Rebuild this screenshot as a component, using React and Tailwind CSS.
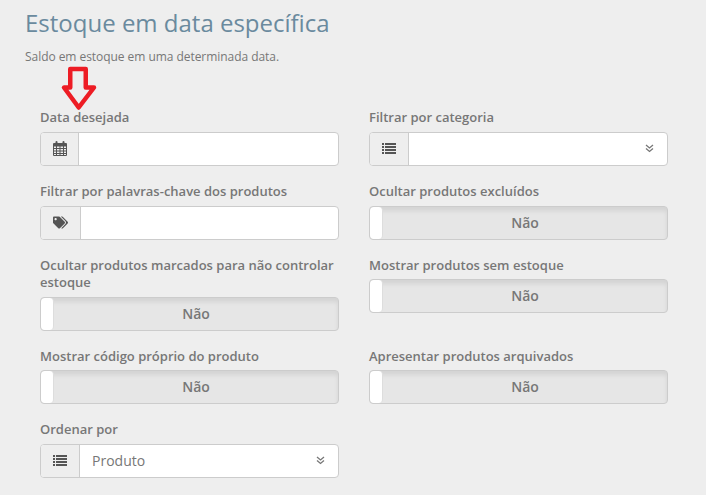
import { FaTags } from 'react-icons/fa'

function CalendarIcon() {
  return (
    <svg width="14" height="15" viewBox="0 0 14 15" className="text-[#555]">
      <path fill="currentColor" fillRule="evenodd" d="M1 2h1.500V1a1 1 0 0 1 2 0v1h5V1a1 1 0 0 1 2 0v1H13a1 1 0 0 1 1 1v11a1 1 0 0 1-1 1H1a1 1 0 0 1-1-1V3a1 1 0 0 1 1-1zM1 5.500V7h2V5.500zm3 0V7h2.500V5.500zm3.500 0V7H10V5.500zm3.500 0V7h2V5.500zM1 8v1.500h2V8zm3 0v1.500h2.500V8zm3.500 0v1.500H10V8zM11 8v1.500h2V8zM1 10.500V12h2v-1.500zm3 0V12h2.500v-1.500zm3.500 0V12H10v-1.500zm3.500 0V12h2v-1.500zM1 13v1h2v-1zm3 0v1h2.500v-1zm3.500 0v1H10v-1zm3.500 0v1h2v-1z" />
    </svg>
  )
}

function ListIcon() {
  return (
    <svg width="14" height="11" viewBox="0 0 14 11" className="text-[#555]">
      <path fill="currentColor" d="M0 0h2v2H0zM3 0h11v2H3zM0 3h2v2H0zM3 3h11v2H3zM0 6h2v2H0zM3 6h11v2H3zM0 9h2v2H0zM3 9h11v2H3z" />
    </svg>
  )
}

function ChevronsIcon() {
  return (
    <svg width="9" height="9" viewBox="0 0 9 9" className="text-[#777]">
      <path d="M1 1L4.500 4L8 1M1 4.500L4.500 7.500L8 4.500" fill="none" stroke="currentColor" strokeWidth="1.300" />
    </svg>
  )
}

function Label({ children }) {
  return <label className="block mb-[5px] text-[13px] leading-[17.6px] font-semibold text-[#777]">{children}</label>
}

function InputGroup({ icon, addon, select, value }) {
  return (
    <div className="flex h-[34px] rounded-[4px] border border-[#ccc] overflow-hidden bg-white">
      <span className={`flex items-center justify-center shrink-0 bg-[#eee] border-r border-[#ccc] ${addon}`}>{icon}</span>
      <div className="flex-1 flex items-center justify-between pl-[12px] pr-[13px] text-[14px] text-[#777]">
        <span>{value}</span>
        {select && <ChevronsIcon />}
      </div>
    </div>
  )
}

function Toggle() {
  return (
    <div className="flex h-[34px] rounded-[4px] border border-[#ccc] bg-[#e6e6e6] shadow-[inset_0_4px_4px_rgba(0,0,0,0.08)] overflow-hidden">
      <span className="w-[13px] shrink-0 bg-white rounded-[4px] border-r border-[#ddd]" />
      <span className="flex-1 flex items-center justify-center pb-[0.8px] text-[14px] font-semibold text-[#777]">Não</span>
    </div>
  )
}

export default function App() {
  return (
    <div className="relative h-[495px] overflow-hidden bg-[#eee] font-['Open_Sans',sans-serif]">
      <div className="px-[25px] pt-[6px]">
        <h1 className="text-[24px] leading-[34px] font-normal text-[#6a8a9e]">Estoque em data específica</h1>
        <p className="mt-[8px] text-[12px] leading-[17px] tracking-[-0.05px] text-[#777]">Saldo em estoque em uma determinada data.</p>
      </div>

      <div className="grid grid-cols-[299px_299px] gap-x-[30px] gap-y-[17px] pl-[40px] pt-[44.4px]">
        <div>
          <Label>Data desejada</Label>
          <InputGroup addon="w-[38px]" icon={<CalendarIcon />} />
        </div>
        <div>
          <Label>Filtrar por categoria</Label>
          <InputGroup addon="w-[39px]" icon={<ListIcon />} select />
        </div>
        <div>
          <Label>Filtrar por palavras-chave dos produtos</Label>
          <InputGroup addon="w-[40px]" icon={<FaTags className="text-[#555] text-[15px]" />} />
        </div>
        <div>
          <Label>Ocultar produtos excluídos</Label>
          <Toggle />
        </div>
        <div>
          <Label>Ocultar produtos marcados para não controlar estoque</Label>
          <Toggle />
        </div>
        <div>
          <Label>Mostrar produtos sem estoque</Label>
          <Toggle />
        </div>
        <div>
          <Label>Mostrar código próprio do produto</Label>
          <Toggle />
        </div>
        <div>
          <Label>Apresentar produtos arquivados</Label>
          <Toggle />
        </div>
        <div>
          <Label>Ordenar por</Label>
          <InputGroup addon="w-[39px]" icon={<ListIcon />} select value="Produto" />
        </div>
      </div>

      {/* red annotation arrow on top of the form */}
      <svg width="40" height="48" viewBox="0 0 40 48" className="absolute left-[59px] top-[64px]">
        <path d="M11.250 5H26.750V23.500H35L19.700 43.500L5 23.500H11.250Z" fill="none" stroke="#ed1c24" strokeWidth="4.500" strokeLinejoin="round" />
      </svg>
    </div>
  )
}
